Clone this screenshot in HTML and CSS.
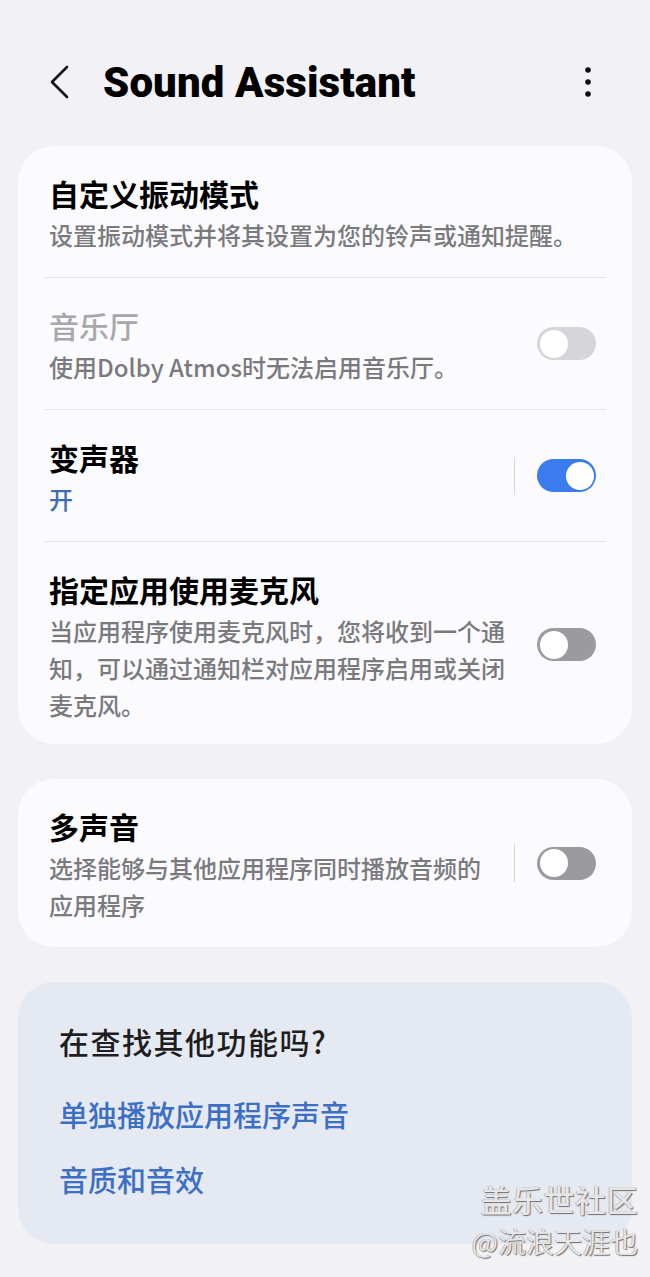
FILE: index.html
```html
<!DOCTYPE html>
<html lang="zh-CN">
<head>
<meta charset="utf-8">
<title>Sound Assistant</title>
<link rel="stylesheet" href="styles.css">
</head>
<body>
<div class="screen">
  <header class="topbar">
    <svg class="back" width="24" height="34" viewBox="0 0 24 34"><polyline points="18,2 3,17 18,32" fill="none" stroke="#111" stroke-width="2.6" stroke-linecap="round" stroke-linejoin="round"/></svg>
    <h1 class="title">Sound Assistant</h1>
    <svg class="more" width="10" height="34" viewBox="0 0 10 34"><circle cx="5" cy="5" r="2.8" fill="#111"/><circle cx="5" cy="17" r="2.8" fill="#111"/><circle cx="5" cy="29" r="2.8" fill="#111"/></svg>
  </header>

  <section class="card">
    <div class="row">
      <div class="text">
        <div class="row-title">自定义振动模式</div>
        <div class="row-sub">设置振动模式并将其设置为您的铃声或通知提醒。</div>
      </div>
    </div>
    <div class="row">
      <div class="text">
        <div class="row-title disabled">音乐厅</div>
        <div class="row-sub">使用Dolby Atmos时无法启用音乐厅。</div>
      </div>
      <div class="switch disabled-switch"><span class="knob"></span></div>
    </div>
    <div class="row">
      <div class="text">
        <div class="row-title">变声器</div>
        <div class="row-sub on-text">开</div>
      </div>
      <span class="vline"></span>
      <div class="switch on"><span class="knob"></span></div>
    </div>
    <div class="row last">
      <div class="text">
        <div class="row-title">指定应用使用麦克风</div>
        <div class="row-sub">当应用程序使用麦克风时，您将收到一个通知，可以通过通知栏对应用程序启用或关闭麦克风。</div>
      </div>
      <div class="switch"><span class="knob"></span></div>
    </div>
  </section>

  <section class="card">
    <div class="row">
      <div class="text">
        <div class="row-title">多声音</div>
        <div class="row-sub">选择能够与其他应用程序同时播放音频的应用程序</div>
      </div>
      <span class="vline"></span>
      <div class="switch"><span class="knob"></span></div>
    </div>
  </section>

  <section class="card suggest">
    <div class="suggest-title">在查找其他功能吗?</div>
    <div class="links">
      <a class="link">单独播放应用程序声音</a>
      <a class="link">音质和音效</a>
    </div>
  </section>

  <div class="watermark">
    <div class="wm1">盖乐世社区</div>
    <div class="wm2">@流浪天涯也</div>
  </div>
</div>
</body>
</html>
```

FILE: styles.css
```css
* { box-sizing: border-box; }
html, body {
  margin: 0;
  padding: 0;
  background: #f2f2f6;
}
body {
  font-family: "Noto Sans CJK SC", "Noto Sans", sans-serif;
  color: #111;
}
.screen {
  position: relative;
  width: 650px;
  height: 1277px;
  overflow: hidden;
}
.topbar {
  height: 64px;
  margin-top: 50px;
  margin-bottom: 32px;
  display: flex;
  align-items: center;
  padding-left: 49px;
  padding-right: 57px;
}
.back { flex: none; }
.title {
  margin: 0 0 0 30px;
  flex: 1;
  font-family: Roboto, "Liberation Sans", sans-serif;
  font-weight: 900;
  font-size: 42px;
  letter-spacing: 0.1px;
  color: #000;
}
.more { flex: none; }

.card {
  margin: 0 18px 35px;
  background: #fbfbfe;
  border-radius: 36px;
}
.row {
  margin: 0 26px;
  padding: 24px 10px 24px 5px;
  display: flex;
  align-items: center;
}
.row.last { padding-bottom: 21px; }
.row + .row { border-top: 1px solid #e3e3e8; }
.text { flex: 1; min-width: 0; }
.text + .switch,
.text + .vline { margin-left: 26px; }
.row-title {
  font-size: 30px;
  line-height: 46px;
  font-weight: 700;
  color: #000;
}
.row-title.disabled {
  color: #a8a8ac;
  font-weight: 500;
}
.row-sub {
  font-size: 24px;
  line-height: 37px;
  font-weight: 500;
  color: #7a7a7e;
}
.on-text { color: #3d6db5; }

.vline {
  flex: none;
  width: 1px;
  height: 38px;
  background: #d6d6da;
  margin-right: 22px;
}
.switch {
  flex: none;
  width: 59px;
  height: 33px;
  border-radius: 17px;
  background: #9a9a9f;
  position: relative;
}
.switch .knob {
  position: absolute;
  top: 2.5px;
  left: 2.5px;
  width: 28px;
  height: 28px;
  border-radius: 50%;
  background: #fff;
}
.switch.on { background: #3b7bf0; }
.switch.on .knob { left: auto; right: 2.5px; }
.disabled-switch { background: #d6d6da; }

.suggest {
  background: #e5eaf2;
  padding: 38px 41px 32px;
}
.suggest-title {
  font-size: 30px;
  line-height: 42px;
  font-weight: 500;
  letter-spacing: 1.5px;
  color: #1e1e1e;
}
.links {
  margin-top: 20px;
  display: flex;
  flex-direction: column;
}
.link {
  font-size: 29px;
  line-height: 65px;
  font-weight: 500;
  color: #3d6fc4;
}

.watermark {
  position: absolute;
  right: 12px;
  top: 1178px;
  text-align: right;
  color: #e6e6e8;
  text-shadow: 1px 1px 1px #6f6f73, -0.5px -0.5px 0 #9a9a9e;
}
.wm1 {
  font-size: 31px;
  line-height: 42px;
  font-weight: 500;
  letter-spacing: 0.5px;
}
.wm2 {
  font-size: 28px;
  line-height: 42px;
  font-weight: 400;
}
```
